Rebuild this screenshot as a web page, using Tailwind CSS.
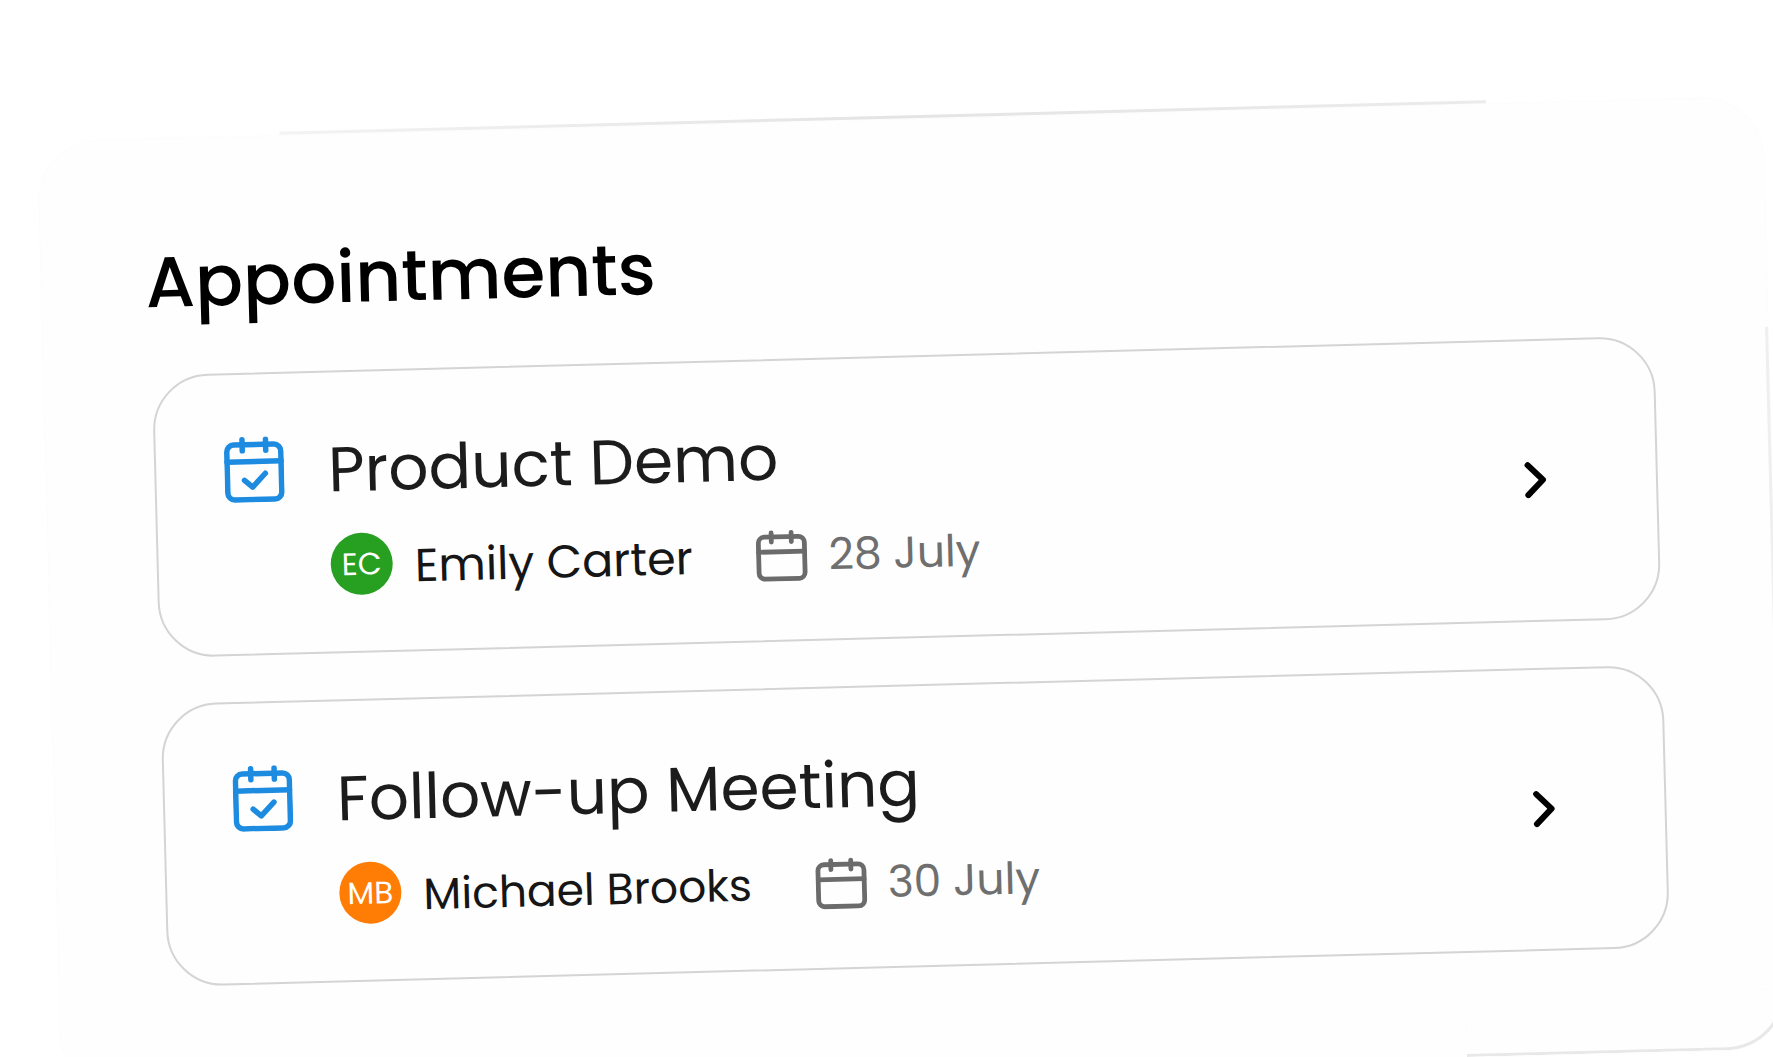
<!DOCTYPE html>
<html lang="en">
<head>
    <meta charset="UTF-8">
    <meta name="viewport" content="width=device-width, initial-scale=1.0">
    <title>Appointments</title>
    <script src="https://cdn.jsdelivr.net/npm/@tailwindcss/browser@4"></script>
</head>
<body class="h-screen overflow-hidden bg-white font-[Poppins,Inter,sans-serif]">
    <!-- Tilted stage -->
    <div class="h-screen -rotate-[1.5deg] pt-30 pl-12">
        <main class="relative min-h-[952px] rounded-[60px] bg-[#fefefe] pt-24 pr-[114px] pl-27 shadow-[0_0_2px_rgba(0,0,0,0.04)]">
            <!-- Edges of the panel that catch the shadow -->
            <div class="absolute -top-1 left-[14%] right-[16%] h-[3px] bg-linear-to-r from-[#f3f3f3] via-[#e4e4e4] to-[#ebebeb]"></div>
            <div class="absolute top-[230px] bottom-[60px] right-0 w-[3px] bg-[#efefef]"></div>
            <div class="absolute right-0 bottom-0 h-[60px] w-[320px] rounded-br-[60px] border-r-3 border-b-3 border-[#e8e8e8]"></div>

            <h1 class="-ml-1 text-[71px] leading-[94px] font-medium text-black">Appointments</h1>

            <ul class="mt-[46px] flex flex-col gap-[46px]">
                <li>
                    <a href="#" class="flex items-center rounded-[56px] border-2 border-[#d4d4d4] bg-[#fefefe] pt-[54px] pr-[108px] pb-14 pl-[68px]">
                        <svg class="mt-2 h-[66px] w-[60px] shrink-0 self-start text-[#1d8be0]" viewBox="0 0 60 66" fill="none" stroke="currentColor" stroke-width="5.500" stroke-linecap="round" stroke-linejoin="round">
                            <rect x="3" y="8" width="54" height="55" rx="7"/>
                            <path d="M3 25H57M18.500 3V14M42 3V14M20 43.500L28 50.500L41 37"/>
                        </svg>
                        <div class="ml-11 flex-1">
                            <h2 class="text-[63px] leading-[86px] text-[#1c1c1c]">Product Demo</h2>
                            <div class="mt-[21px] flex h-[62px] items-center">
                                <span class="flex size-[62px] shrink-0 items-center justify-center rounded-full bg-[#27a022] text-[31px] text-white">EC</span>
                                <div class="ml-[22px] flex items-center pt-1.5">
                                    <span class="text-[46px] leading-[62px] text-[#161616]">Emily Carter</span>
                                    <svg class="ml-[63px] size-[52px] shrink-0 text-[#6b6b6b]" viewBox="0 0 52 52" fill="none" stroke="currentColor" stroke-width="4.800" stroke-linecap="round" stroke-linejoin="round">
                                        <rect x="3" y="7" width="46" height="42" rx="6"/>
                                        <path d="M3 22H49M16 3V12M36 3V12"/>
                                    </svg>
                                    <time datetime="07-28" class="ml-[21px] text-[44px] leading-[62px] text-[#6f6f6f]">28 July</time>
                                </div>
                            </div>
                        </div>
                        <svg class="h-[38px] w-6 shrink-0 text-black" viewBox="0 0 24 38" fill="none" stroke="currentColor" stroke-width="6" stroke-linecap="round" stroke-linejoin="round">
                            <path d="M4 4L19 19L4 34"/>
                        </svg>
                    </a>
                </li>
                <li>
                    <a href="#" class="flex items-center rounded-[56px] border-2 border-[#d4d4d4] bg-[#fefefe] pt-[54px] pr-[108px] pb-14 pl-[68px]">
                        <svg class="mt-2 h-[66px] w-[60px] shrink-0 self-start text-[#1d8be0]" viewBox="0 0 60 66" fill="none" stroke="currentColor" stroke-width="5.500" stroke-linecap="round" stroke-linejoin="round">
                            <rect x="3" y="8" width="54" height="55" rx="7"/>
                            <path d="M3 25H57M18.500 3V14M42 3V14M20 43.500L28 50.500L41 37"/>
                        </svg>
                        <div class="ml-11 flex-1">
                            <h2 class="text-[63px] leading-[86px] text-[#1c1c1c]">Follow-up Meeting</h2>
                            <div class="mt-[21px] flex h-[62px] items-center">
                                <span class="flex size-[62px] shrink-0 items-center justify-center rounded-full bg-[#ff7c05] text-[31px] text-white">MB</span>
                                <div class="ml-[22px] flex items-center pt-1.5">
                                    <span class="text-[44px] leading-[62px] text-[#161616]">Michael Brooks</span>
                                    <svg class="ml-[63px] size-[52px] shrink-0 text-[#6b6b6b]" viewBox="0 0 52 52" fill="none" stroke="currentColor" stroke-width="4.800" stroke-linecap="round" stroke-linejoin="round">
                                        <rect x="3" y="7" width="46" height="42" rx="6"/>
                                        <path d="M3 22H49M16 3V12M36 3V12"/>
                                    </svg>
                                    <time datetime="07-30" class="ml-[21px] text-[44px] leading-[62px] text-[#6f6f6f]">30 July</time>
                                </div>
                            </div>
                        </div>
                        <svg class="h-[38px] w-6 shrink-0 text-black" viewBox="0 0 24 38" fill="none" stroke="currentColor" stroke-width="6" stroke-linecap="round" stroke-linejoin="round">
                            <path d="M4 4L19 19L4 34"/>
                        </svg>
                    </a>
                </li>
            </ul>
        </main>
    </div>
</body>
</html>
